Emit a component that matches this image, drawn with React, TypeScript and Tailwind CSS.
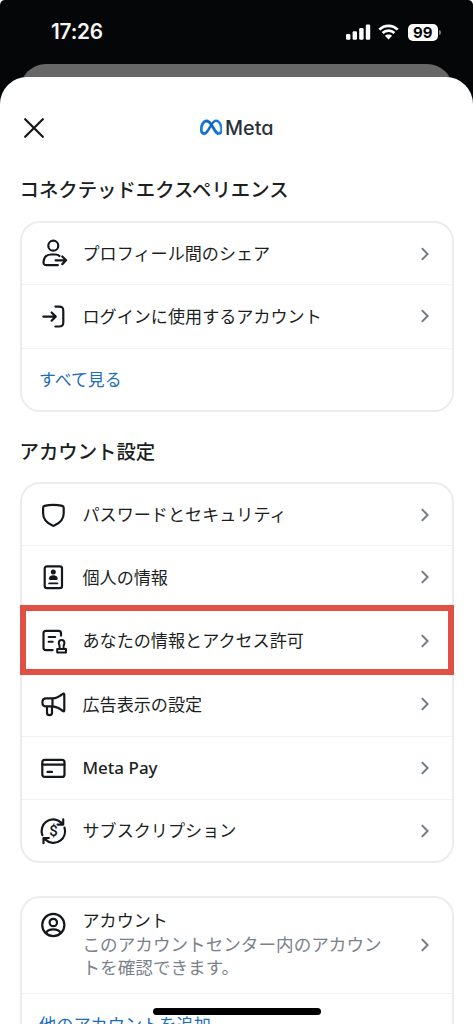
import type { ReactNode } from "react";
import { SiMeta } from "react-icons/si";

function Icon({ children }: { children: ReactNode }) {
  return (
    <svg
      className="size-[30px] shrink-0"
      viewBox="0 0 30 30"
      fill="none"
      stroke="#15181b"
      strokeWidth="2.2"
      strokeLinecap="round"
      strokeLinejoin="round"
    >
      {children}
    </svg>
  );
}

const ShareIcon = () => (
  <Icon>
    <circle cx="15.3" cy="6.7" r="5" />
    <path d="M19.8 26.2H8.4C6 26.2 5.3 24.8 5.6 22.4C6.2 18.2 9 15.5 13 15.5H17.6C19.4 15.5 20.6 16 21.4 17M17.6 21.3H28M24.3 17.5L28.1 21.3L24.3 25.1" />
  </Icon>
);

const LoginIcon = () => (
  <Icon>
    <path d="M17.4 5.6H21C24.3 5.6 25.3 6.6 25.3 9.9V21.2C25.3 24.6 24.3 25.5 21 25.5H17.4M5.3 15.6H17.6M13.6 11.5L17.7 15.6L13.6 19.7" />
  </Icon>
);

const ShieldIcon = () => (
  <Icon>
    <path d="M15.4 4.8C18.2 4.8 21.5 5.1 24.2 5.9C25.2 6.2 25.7 6.9 25.7 7.9V13.3C25.7 19.2 21.7 23.2 16.3 25.6Q15.4 26 14.5 25.6C9.1 23.2 5.1 19.2 5.1 13.3V7.9C5.1 6.9 5.6 6.2 6.6 5.9C9.3 5.1 12.6 4.8 15.4 4.8Z" />
  </Icon>
);

const IdIcon = () => (
  <Icon>
    <rect x="6.7" y="4.4" width="17.3" height="21.8" rx="2.2" />
    <circle cx="15.3" cy="9.9" r="2.5" fill="#15181b" stroke="none" />
    <path d="M10.9 16.6C10.9 14.5 12.7 13.2 15.3 13.2S19.7 14.5 19.7 16.6Q19.7 18 18.4 18H12.2Q10.9 18 10.9 16.6Z" fill="#15181b" stroke="none" />
    <path d="M11.2 21.4H19.4" strokeWidth="1.9" />
  </Icon>
);

const StampIcon = () => (
  <Icon>
    <path d="M14.6 24.1H7.9C6.3 24.1 5.5 23.3 5.5 21.7V7.2C5.5 5.6 6.3 4.8 7.9 4.8H20.6C22.2 4.8 23 5.6 23 7.2V9.6" />
    <path d="M10.6 11H17.2M10.6 15.7H14.7" strokeWidth="2" />
    <path d="M19.2 22.9H28V26.6H19.2ZM21.6 22.6V20.2C21.6 19 20.8 18.3 20.8 16.9C20.8 15.2 21.9 14.1 23.6 14.1S26.4 15.2 26.4 16.9C26.4 18.3 25.6 19 25.6 20.2V22.6" strokeWidth="2" />
  </Icon>
);

const MegaphoneIcon = () => (
  <Icon>
    <path d="M14.8 9.4H8.3C5.8 9.4 4.4 11.1 4.4 13.4S5.8 17.4 8.3 17.4H14.8C19 17.7 22.2 20 24.9 22Q26.3 22.8 26.3 21.3V5.6Q26.3 4 24.9 4.8C22.2 6.8 19 9.1 14.8 9.4ZM14.5 9.4V17.2M9 17.8V23.7C9 25.3 9.9 26.1 11.5 26.1S14 25.3 14 23.7V17.8" />
  </Icon>
);

const CardIcon = () => (
  <Icon>
    <rect x="4.3" y="6.9" width="22.2" height="17" rx="2.5" />
    <path d="M4.5 11.6H26.3M9.5 18.9H14" />
  </Icon>
);

const SubscriptionIcon = () => (
  <Icon>
    <path d="M4.4 19.1C2.6 14.4 4.1 8.9 8 5.9C12.8 2.2 19.2 2.6 23.6 7.1M25.2 3.3V8.6H19.6M26.5 11.6C28 16.3 26.4 21.5 22.6 24.4C17.9 28 11.5 27.6 7.1 23.4M5.5 27.2V22H10.8" />
    <text x="15.4" y="20.4" textAnchor="middle" className="font-['Roboto',sans-serif] text-[15px] font-medium" fill="#15181b" stroke="none">
      $
    </text>
  </Icon>
);

const AccountIcon = () => (
  <Icon>
    <circle cx="15.3" cy="15" r="11.1" />
    <circle cx="15.3" cy="12.5" r="3.7" />
    <path d="M8.2 22.8C9.3 20.3 11.7 19.4 15.3 19.4S21.3 20.3 22.4 22.8" />
  </Icon>
);

function Chevron() {
  return (
    <svg className="mr-[22px] h-[14px] w-[10px] shrink-0" viewBox="0 0 10 14" fill="none" stroke="#737b84" strokeWidth="2">
      <path d="M1.8 1.1L7.6 7L1.8 12.9" />
    </svg>
  );
}

type RowProps = { icon: ReactNode; label: string; first?: boolean; last?: boolean; latin?: boolean };

function Row({ icon, label, first, last, latin }: RowProps) {
  const box = first ? "h-[61px]" : last ? "h-[62px] border-t border-[#f0f1f1]" : "h-[63.5px] border-t border-[#f0f1f1]";
  return (
    <div className={`flex items-center pl-[16px] ${box}`}>
      {icon}
      <span className={`ml-[15px] flex-1 leading-6 ${latin ? "font-['Noto_Sans'] text-[17px] font-medium" : "-mt-px text-[17.1px]"}`}>{label}</span>
      <Chevron />
    </div>
  );
}

const card = "rounded-[20px] border-2 border-[#ebecec]";
const heading = "h-[45.5px] text-[19.4px] leading-[26px] font-medium";

export default function App() {
  return (
    <div lang="ja" className="relative h-[1024px] w-[473px] overflow-hidden bg-white font-['Noto_Sans_CJK_JP',sans-serif] text-[#1c1f22]">
      <div className="flex h-[120px] flex-col rounded-t-[5px] bg-[#040608]">
        <div className="flex h-16 items-center justify-between pr-[32px] pl-[51px]">
          <span className="font-['Inter',sans-serif] text-[20.8px] leading-none font-semibold tracking-[-0.2px] text-[#f5f5f5]">17:26</span>
          <div className="flex items-center">
            <svg className="h-[16px] w-[25px]" viewBox="0 0 25 16" fill="#fff">
              <rect x="0" y="10" width="4.4" height="5.7" rx="1.3" />
              <rect x="6.6" y="7.3" width="4.4" height="8.4" rx="1.3" />
              <rect x="13.2" y="4" width="4.4" height="11.7" rx="1.3" />
              <rect x="19.8" y="0.4" width="4.4" height="15.3" rx="1.3" />
            </svg>
            <svg className="ml-[7.5px] h-[16px] w-[21px]" viewBox="0 0 21 16" fill="none" stroke="#fff" strokeWidth="2.7">
              <path d="M1.3 5.6C6.4 .5 14.6 .5 19.7 5.6M4.6 9C7.9 5.8 13.1 5.8 16.4 9" />
              <path d="M10.5 15.5L6.9 11.8C8.8 9.9 12.2 9.9 14.1 11.8Z" fill="#fff" stroke="none" />
            </svg>
            <span className="ml-[8.5px] flex h-[17px] w-[30.5px] items-center justify-center rounded-[5px] bg-white font-['Inter',sans-serif] text-[15px] leading-none font-bold text-[#040608]">
              99
            </span>
            <span className="ml-[1px] h-[5px] w-[2px] rounded-r bg-[#777]" />
          </div>
        </div>
        <div className="mx-[20px] h-[40px] rounded-t-[26px] bg-[#676767]" />
      </div>

      <main className="relative -mt-[43.5px] rounded-t-[27px] bg-white px-[19.5px]">
        <header className="relative flex h-[102px] items-center justify-center">
          <svg className="absolute top-[41px] left-[4px] size-[20px]" viewBox="0 0 20 20" stroke="#15181b" strokeWidth="2.2" strokeLinecap="round">
            <path d="M1.2 1.2L18.8 18.8M18.8 1.2L1.2 18.8" />
          </svg>
          <svg width="0" height="0" className="absolute">
            <linearGradient id="metaBlue" x1="0" x2="1" y1="0" y2="0">
              <stop offset="0" stopColor="#1877d8" />
              <stop offset="0.5" stopColor="#0b60c4" />
              <stop offset="1" stopColor="#1787ea" />
            </linearGradient>
          </svg>
          <SiMeta size={22.5} fill="url(#metaBlue)" stroke="url(#metaBlue)" strokeWidth={0.5} />
          <span className="ml-[3px] font-['Inter',sans-serif] text-[19.8px] leading-6 font-medium text-[#29323a] [font-feature-settings:'cv11']">Meta</span>
        </header>

        <h2 className={`mt-[-3px] ${heading}`}>コネクテッドエクスペリエンス</h2>
        <section className={card}>
          <Row first icon={<ShareIcon />} label="プロフィール間のシェア" />
          <Row icon={<LoginIcon />} label="ログインに使用するアカウント" />
          <div className="flex h-[62px] items-center border-t border-[#f0f1f1] pl-[17.5px] text-[16.9px] text-[#1d6dbd]">すべて見る</div>
        </section>

        <h2 className={`mt-[26px] ${heading} -mb-px`}>アカウント設定</h2>
        <section className={card}>
          <Row first icon={<ShieldIcon />} label="パスワードとセキュリティ" />
          <Row icon={<IdIcon />} label="個人の情報" />
          <div className="relative">
            <Row icon={<StampIcon />} label="あなたの情報とアクセス許可" />
            <div className="absolute -inset-x-[2px] -top-[4px] h-[70px] border-[6px] border-[#e05044]" />
          </div>
          <Row icon={<MegaphoneIcon />} label="広告表示の設定" />
          <Row latin icon={<CardIcon />} label="Meta Pay" />
          <Row last icon={<SubscriptionIcon />} label="サブスクリプション" />
        </section>

        <section className={`${card} mt-[33px]`}>
          <div className="flex h-[94.5px] items-center pl-[16px]">
            <div className="mt-[12px] self-start">
              <AccountIcon />
            </div>
            <div className="ml-[15px] flex-1 pb-[4px] text-[17.1px] leading-[23px]">
              <p className="leading-6">アカウント</p>
              <p className="text-[17.6px] text-[#7b8289]">
                このアカウントセンター内のアカウン
                <br />
                トを確認できます。
              </p>
            </div>
            <Chevron />
          </div>
          <div className="h-[80px] border-t border-[#f0f1f1] pt-[18px] pl-[17.5px] text-[17.2px] leading-6 text-[#1d6dbd]">他のアカウントを追加</div>
        </section>
      </main>
      <div className="absolute top-[1008px] left-[153px] h-[6.5px] w-[168px] rounded-full bg-black" />
    </div>
  );
}
